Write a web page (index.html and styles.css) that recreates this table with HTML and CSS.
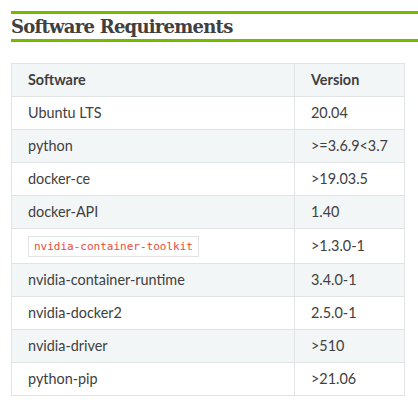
FILE: index.html
```html
<!DOCTYPE html>
<html>
<head>
<meta charset="utf-8">
<link rel="stylesheet" href="styles.css">
</head>
<body>
<div class="page">
  <h2 class="title">Software Requirements</h2>
  <table class="req">
    <thead>
      <tr><th class="c1">Software</th><th class="c2">Version</th></tr>
    </thead>
    <tbody>
      <tr><td>Ubuntu LTS</td><td>20.04</td></tr>
      <tr><td>python</td><td>&gt;=3.6.9&lt;3.7</td></tr>
      <tr><td>docker-ce</td><td>&gt;19.03.5</td></tr>
      <tr><td>docker-API</td><td>1.40</td></tr>
      <tr><td><code class="code">nvidia-container-toolkit</code></td><td>&gt;1.3.0-1</td></tr>
      <tr><td>nvidia-container-runtime</td><td>3.4.0-1</td></tr>
      <tr><td>nvidia-docker2</td><td>2.5.0-1</td></tr>
      <tr><td>nvidia-driver</td><td>&gt;510</td></tr>
      <tr><td>python-pip</td><td>&gt;21.06</td></tr>
    </tbody>
  </table>
</div>
</body>
</html>
```

FILE: styles.css
```css
html, body {
  margin: 0;
  padding: 0;
  background: #ffffff;
}
.page {
  padding: 11px 0 0 11px;
  font-family: Lato, "Open Sans", sans-serif;
  color: #404040;
}
.title {
  margin: 0;
  border-top: 3px solid #76b900;
  border-bottom: 3px solid #76b900;
  height: 25px;
  font-family: "DejaVu Serif", serif;
  font-weight: bold;
  font-size: 18px;
  letter-spacing: -0.75px;
  line-height: 25px;
  color: #404040;
}
.req {
  margin-top: 21px;
  border-collapse: collapse;
  border: 1px solid #e1e4e5;
  width: 394px;
  font-size: 14.4px;
}
.req th, .req td {
  border: 1px solid #e1e4e5;
  padding: 8px 16px;
  line-height: 16px;
  text-align: left;
}
.req th {
  background: #f3f6f6;
  font-weight: bold;
}
.req .c1 { width: 250px; }
.req tbody tr:nth-child(even) td {
  background: #f3f6f6;
}
.code {
  font-family: "DejaVu Sans Mono", monospace;
  font-size: 11px;
  color: #e74c3c;
  background: #ffffff;
  border: 1px solid #e1e4e5;
  padding: 3px 5px;
}
```
